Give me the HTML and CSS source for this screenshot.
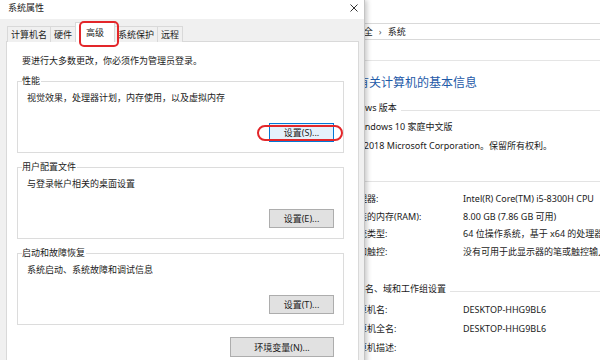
FILE: index.html
```html
<!DOCTYPE html>
<html lang="zh-CN">
<head>
  <meta charset="UTF-8">
  <title>系统属性</title>
  <link rel="stylesheet" href="styles.css">
</head>
<body>
  <!-- 背景：控制面板 系统 窗口 -->
  <div class="sysinfo">
    <div class="toolbar"></div>
    <div class="address">
      <span class="crumb">控制面板</span><span class="gt">›</span><span class="crumb">系统和安全</span><span class="gt">›</span><span class="crumb">系统</span>
    </div>
    <div class="sep"></div>
    <div class="info">
      <h2 class="heading">查看有关计算机的基本信息</h2>

      <section class="sect sect-win">
        <div class="sect-head"><span>Windows 版本</span><i class="rule"></i></div>
        <div class="line">Windows 10 家庭中文版</div>
        <div class="line">© 2018 Microsoft Corporation。保留所有权利。</div>
      </section>

      <section class="sect sect-sys">
        <div class="sect-head"><span>系统</span><i class="rule"></i></div>
        <div class="rows">
          <div class="row"><span class="key">处理器:</span><span>Intel(R) Core(TM) i5-8300H CPU</span></div>
          <div class="row"><span class="key">安装的内存(RAM):</span><span>8.00 GB (7.86 GB 可用)</span></div>
          <div class="row"><span class="key">系统类型:</span><span>64 位操作系统，基于 x64 的处理器</span></div>
          <div class="row"><span class="key">笔和触控:</span><span>没有可用于此显示器的笔或触控输入</span></div>
        </div>
      </section>

      <section class="sect sect-net">
        <div class="sect-head"><span>计算机名、域和工作组设置</span><i class="rule"></i></div>
        <div class="rows rows-net">
          <div class="row"><span class="key">计算机名:</span><span>DESKTOP-HHG9BL6</span></div>
          <div class="row"><span class="key">计算机全名:</span><span>DESKTOP-HHG9BL6</span></div>
          <div class="row"><span class="key">计算机描述:</span><span></span></div>
        </div>
      </section>
    </div>
  </div>

  <!-- 前景：系统属性 对话框 -->
  <div class="dialog">
    <div class="titlebar">
      <span>系统属性</span>
      <svg class="close" width="8" height="8" viewBox="0 0 8 8">
        <path d="M0.5 0.5L7.5 7.5M7.5 0.5L0.5 7.5" stroke="#333" stroke-width="1" fill="none"/>
      </svg>
    </div>

    <div class="dlg-body">
      <div class="tabs">
        <div class="tab">计算机名</div>
        <div class="tab">硬件</div>
        <div class="tab on">高级</div>
        <div class="tab">系统保护</div>
        <div class="tab">远程</div>
      </div>

      <div class="panel">
        <p class="intro">要进行大多数更改，你必须作为管理员登录。</p>

        <fieldset class="group">
          <legend>性能</legend>
          <p>视觉效果，处理器计划，内存使用，以及虚拟内存</p>
          <div class="btn-row"><button class="btn focus">设置(S)...</button></div>
        </fieldset>

        <fieldset class="group">
          <legend>用户配置文件</legend>
          <p>与登录帐户相关的桌面设置</p>
          <div class="btn-row"><button class="btn">设置(E)...</button></div>
        </fieldset>

        <fieldset class="group">
          <legend>启动和故障恢复</legend>
          <p>系统启动、系统故障和调试信息</p>
          <div class="btn-row"><button class="btn">设置(T)...</button></div>
        </fieldset>

        <div class="btn-row env-row"><button class="btn btn-wide">环境变量(N)...</button></div>
      </div>
    </div>

    <!-- 红色标注 -->
    <div class="mark mark-tab"></div>
    <div class="mark mark-btn"></div>
  </div>
</body>
</html>
```

FILE: styles.css
```css
* {
  margin: 0;
  padding: 0;
  box-sizing: border-box;
}

body {
  width: 600px;
  height: 360px;
  overflow: hidden;
  position: relative;
  background: #fff;
  font-family: "Noto Sans", "Noto Sans CJK SC", sans-serif;
  font-size: 9px;
  line-height: 12px;
  color: #1a1a1a;
}

/* ---------- 背景窗口 ---------- */
.sysinfo {
  position: absolute;
  left: 0;
  top: 0;
  width: 600px;
  height: 360px;
  background: #fff;
}

.toolbar {
  height: 23px;
}

.address {
  height: 17px;
  border-top: 1px solid #d9d9d9;
  border-bottom: 1px solid #d9d9d9;
  line-height: 15px;
  padding-left: 277px;
  display: flex;
  white-space: nowrap;
}

.address .gt {
  margin: 0 6px;
  color: #555;
}

.sep {
  height: 21px;
  border-bottom: 1px solid #e5e5e5;
}

.info {
  padding: 14px 0 0 333px;
  white-space: nowrap;
}

.heading {
  font-size: 12px;
  line-height: 16px;
  font-weight: normal;
  color: #1e5aa8;
}

.sect {
  margin-left: 5px;
}

.sect-win {
  margin-top: 8px;
}

.sect-sys {
  margin-top: 15px;
}

.sect-net {
  margin-top: 20px;
}

.sect-head {
  height: 18px;
  display: flex;
  align-items: center;
}

.sect-head .rule {
  flex: 1;
  margin: 4px 0 0 4px;
  border-top: 1px solid #e3e3e3;
}

.line {
  height: 19px;
  line-height: 19px;
  padding-left: 16px;
}

.rows {
  margin-top: 2px;
}

.row {
  height: 17.5px;
  line-height: 17.5px;
  display: flex;
  padding-left: 11px;
}

.rows-net .row {
  height: 19px;
  line-height: 19px;
}

.row .key {
  width: 114px;
  flex-shrink: 0;
}

/* ---------- 对话框 ---------- */
.dialog {
  position: absolute;
  left: 0;
  top: 0;
  width: 365px;
  height: 380px;
  background: #f0f0f0;
  border-right: 1px solid #c4c4c4;
  box-shadow: 2px 0 5px rgba(0, 0, 0, 0.22);
  z-index: 1;
}

.titlebar {
  height: 19px;
  background: #fff;
  display: flex;
  align-items: center;
  justify-content: space-between;
  padding: 0 6px 3px 8px;
}

.close {
  display: block;
}

.dlg-body {
  padding: 3px 5px 0 6px;
}

.tabs {
  height: 20px;
  display: flex;
  align-items: flex-end;
  padding-left: 1px;
  margin-bottom: -1px;
  position: relative;
  z-index: 1;
}

.tab {
  height: 16px;
  line-height: 15px;
  padding: 0 3px;
  margin-right: -1px;
  border: 1px solid #d9d9d9;
  border-bottom: none;
  background: #f0f0f0;
  white-space: nowrap;
}

.tab.on {
  height: 20px;
  line-height: 20px;
  padding: 0 10px;
  background: #fff;
  position: relative;
  z-index: 1;
}

.panel {
  height: 340px;
  background: #fff;
  border: 1px solid #d9d9d9;
  padding: 13px 14px 0 10px;
}

.intro {
  padding-left: 5px;
}

.group {
  margin-top: 8px;
  border: 1px solid #dcdcdc;
  padding: 0 9px 10px 4px;
  min-width: 0;
}

.group legend {
  padding: 0 1px 0 0;
  line-height: 12px;
}

.group p {
  margin-top: 5px;
  padding-left: 5px;
}

.btn-row {
  display: flex;
  justify-content: flex-end;
}

.btn {
  margin-top: 19px;
  width: 65px;
  height: 19px;
  font-family: inherit;
  font-size: 9px;
  line-height: 17px;
  color: #1a1a1a;
  background: #e1e1e1;
  border: 1px solid #adadad;
}

.btn.focus {
  background: #e5f1fb;
  border-color: #0078d7;
}

.env-row {
  padding-right: 10px;
}

.env-row .btn {
  margin-top: 12px;
}

.btn-wide {
  width: 104px;
  height: 20px;
}

/* 红色标注框 */
.mark {
  position: absolute;
  border: 2px solid #e3262a;
  z-index: 2;
}

.mark-tab {
  left: 79px;
  top: 21px;
  width: 40px;
  height: 26px;
  border-radius: 5px;
}

.mark-btn {
  left: 257px;
  top: 125px;
  width: 86px;
  height: 16px;
  border-radius: 8px;
}
```
